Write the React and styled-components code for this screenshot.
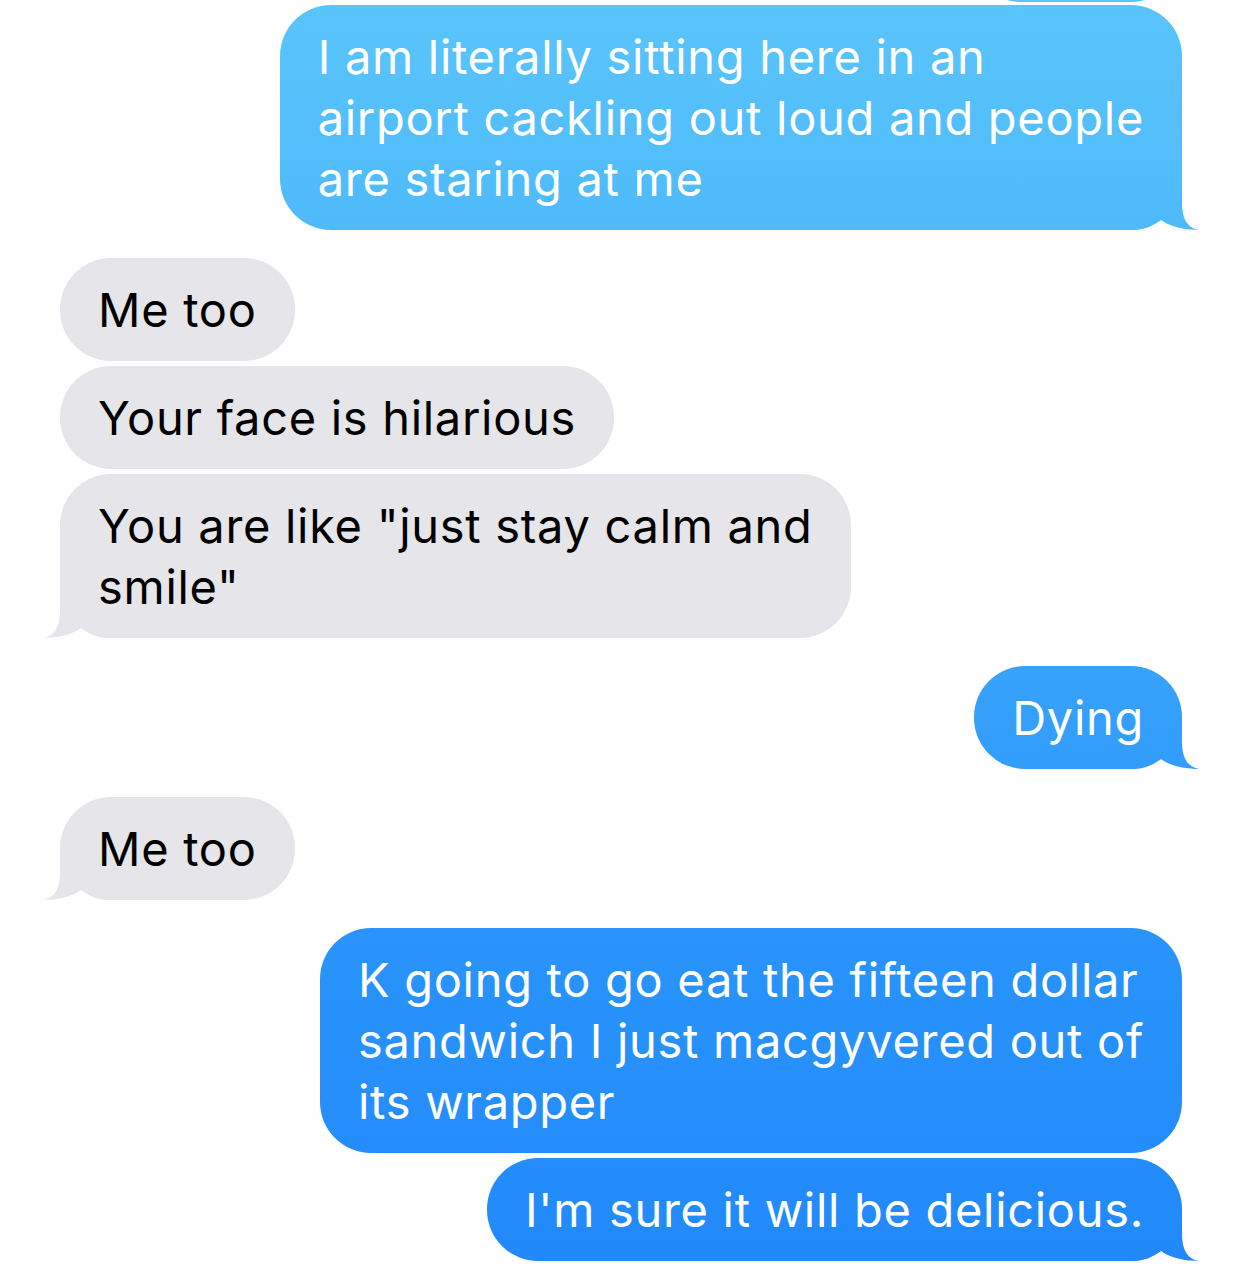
import React from "react";
import styled, { createGlobalStyle, css } from "styled-components";

const GlobalStyle = createGlobalStyle`
  html, body {
    margin: 0;
    padding: 0;
    background: #ffffff;
  }
  body {
    font-family: Inter, "Noto Sans", "Liberation Sans", sans-serif;
    overflow: hidden;
    -webkit-font-smoothing: antialiased;
  }
`;

const SENT_TAIL =
  "path('M 0 0 L 50 0 L 50 22 C 50 40 56 48 67 50 C 55 50 36 47 28 39 C 22 46 12 50 0 50 Z')";
const RECV_TAIL =
  "path('M 67 0 L 17 0 L 17 22 C 17 40 11 48 0 50 C 12 50 31 47 39 39 C 45 46 55 50 67 50 Z')";

const Thread = styled.div`
  display: flex;
  flex-direction: column;
  padding: 0 60px;
  height: 1271px;
  box-sizing: border-box;
`;

const Row = styled.div`
  display: flex;
  justify-content: ${(p) => (p.$sent ? "flex-end" : "flex-start")};
  margin-top: ${(p) => p.$gap || 0}px;
`;

const sentFill = css`
  color: #ffffff;
  background-image: linear-gradient(180deg, #5ac5fb 0px, #45b1fa 420px, #2a95fb 900px, #2189fb 1271px);
  background-attachment: fixed;
`;

const recvFill = css`
  color: #000000;
  background-color: #e5e5ea;
`;

const Bubble = styled.div`
  position: relative;
  isolation: isolate;
  box-sizing: border-box;
  padding: 21px 38px;
  border-radius: 51px;
  font-size: 47px;
  line-height: 61px;
  letter-spacing: 0.7px;
  white-space: nowrap;
  ${(p) => (p.$sent ? sentFill : recvFill)}

  &::after {
    content: ${(p) => (p.$tail ? '""' : "none")};
    position: absolute;
    z-index: -1;
    bottom: 0;
    width: 67px;
    height: 50px;
    background: inherit;
    ${(p) =>
      p.$sent
        ? css`
            right: -17px;
            clip-path: ${SENT_TAIL};
          `
        : css`
            left: -17px;
            clip-path: ${RECV_TAIL};
          `}
  }
`;

const Peek = styled.div`
  width: 212px;
  height: 103px;
  margin-top: -101px;
  border-radius: 51px;
  ${sentFill}
`;

const messages = [
  { sent: true, gap: 3, tail: true, lines: ["I am literally sitting here in an", "airport cackling out loud and people", "are staring at me"] },
  { sent: false, gap: 28, lines: ["Me too"] },
  { sent: false, gap: 5, lines: ["Your face is hilarious"] },
  { sent: false, gap: 5, tail: true, lines: ['You are like "just stay calm and', 'smile"'] },
  { sent: true, gap: 28, tail: true, lines: ["Dying"] },
  { sent: false, gap: 28, tail: true, lines: ["Me too"] },
  { sent: true, gap: 28, lines: ["K going to go eat the fifteen dollar", "sandwich I just macgyvered out of", "its wrapper"] },
  { sent: true, gap: 5, tail: true, lines: ["I'm sure it will be delicious."] },
];

export default function App() {
  return (
    <>
      <GlobalStyle />
      <Thread>
        <Row $sent>
          <Peek />
        </Row>
        {messages.map((m, i) => (
          <Row key={i} $sent={m.sent} $gap={m.gap}>
            <Bubble $sent={m.sent} $tail={m.tail}>
              {m.lines.map((l, j) => (
                <React.Fragment key={j}>
                  {j > 0 && <br />}
                  {l}
                </React.Fragment>
              ))}
            </Bubble>
          </Row>
        ))}
      </Thread>
    </>
  );
}
